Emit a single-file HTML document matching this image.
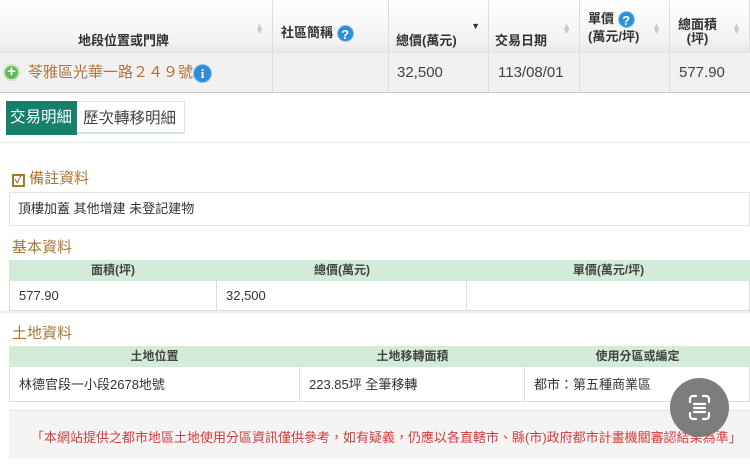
<!DOCTYPE html>
<html><head><meta charset="utf-8"><style>
*{margin:0;padding:0;box-sizing:border-box}
body{width:750px;height:459px;overflow:hidden;background:#fff;font-family:"Liberation Sans","Noto Sans CJK TC",sans-serif;position:relative;color:#333}
.a{position:absolute}
.hd{top:0;height:53px;background:linear-gradient(#fff,#f2f2f2 80%,#e6e6e6);border-right:1px solid #ddd;font-size:13px;font-weight:bold;color:#333}
.dr{top:53px;height:40px;background:#f1f1f1;border-right:1px solid #ddd;border-bottom:1px solid #ccc;font-size:15px;color:#444;line-height:40px}
.sort{position:absolute;right:8px;top:24px;color:#ccc;font-size:9px;line-height:5px}
.q{display:inline-block;width:17px;height:17px;border-radius:50%;background:#2e8fd6;color:#fff;font-size:13px;text-align:center;line-height:17px;vertical-align:middle;border:1px solid #8cc4ee}
.ttl{color:#a9762e;font-size:15px}
.th{background:#d3ebd9;height:21px;font-size:12px;font-weight:bold;color:#444;text-align:center;line-height:21px}
.td{height:30px;font-size:13px;line-height:30px;padding-left:9px;background:#fff;border-right:1px solid #ddd;border-bottom:1px solid #ddd}
</style></head><body>
<div class="a" style="top:0;left:0;width:750px;height:93px;background:#f1f1f1"></div>
<div class="a hd" style="left:0;width:273px"><span class="a" style="left:78px;top:30px">地段位置或門牌</span><span class="sort">▲<br>▼</span></div>
<div class="a hd" style="left:273px;width:116px"><span class="a" style="left:8px;top:22px">社區簡稱 <span class="q">?</span></span></div>
<div class="a hd" style="left:389px;width:100px"><span class="a" style="left:7px;top:30px">總價(萬元)</span><span class="sort" style="color:#333">▼</span></div>
<div class="a hd" style="left:489px;width:91px"><span class="a" style="left:6px;top:30px">交易日期</span><span class="sort">▲<br>▼</span></div>
<div class="a hd" style="left:580px;width:90px"><span class="a" style="left:8px;top:10px;line-height:17px">單價 <span class="q">?</span><br>(萬元/坪)</span><span class="sort">▲<br>▼</span></div>
<div class="a hd" style="left:670px;width:80px"><span class="a" style="left:8px;top:18px;line-height:14px;text-align:center">總面積<br>(坪)</span><span class="sort">▲<br>▼</span></div>
<div class="a dr" style="left:0;width:273px"><span class="a" style="left:3px;top:11px;width:17px;height:17px;border-radius:50%;background:#5cb85c;border:2px solid #c9e6b8;color:#fff;font-size:15px;line-height:12px;text-align:center;font-weight:bold">+</span><span class="a" style="left:28px;color:#b0733d">苓雅區光華一路２４９號<span class="q" style="width:19px;height:19px;font-family:'Liberation Serif';font-weight:bold">i</span></span></div>
<div class="a dr" style="left:273px;width:116px"></div>
<div class="a dr" style="left:389px;width:100px;padding-left:8px">32,500</div>
<div class="a dr" style="left:489px;width:91px;padding-left:9px">113/08/01</div>
<div class="a dr" style="left:580px;width:90px"></div>
<div class="a dr" style="left:670px;width:80px;padding-left:9px;border-right:0">577.90</div>
<div class="a" style="left:6px;top:101px;width:179px;height:33px;border:1px solid #e3e3e3;border-bottom:2px solid #cfe6dc;font-size:15.5px;line-height:33px">
<span class="a" style="left:-1px;top:-1px;width:71px;height:34px;background:#17806b;color:#fff;padding-left:4px">交易明細</span>
<span class="a" style="left:76px;color:#444">歷次轉移明細</span></div>
<div class="a" style="left:0;top:142px;width:750px;height:1px;background:#e8e8e8"></div>
<div class="a ttl" style="left:12px;top:167px"><span style="border:2px solid #a9762e;display:inline-block;width:13px;height:13px;line-height:9px;text-align:center;font-size:11px;font-weight:bold">✓</span> 備註資料</div>
<div class="a" style="left:9px;top:192px;width:741px;height:34px;border:1px solid #e3e3e3;font-size:13px;line-height:32px;padding-left:8px">頂樓加蓋 其他增建 未登記建物</div>
<div class="a ttl" style="left:12px;top:236px">基本資料</div>
<div class="a th" style="left:9px;top:260px;width:208px">面積(坪)</div>
<div class="a th" style="left:217px;top:260px;width:250px">總價(萬元)</div>
<div class="a th" style="left:467px;top:260px;width:283px">單價(萬元/坪)</div>
<div class="a td" style="left:9px;top:281px;width:208px;border-left:1px solid #ddd">577.90</div>
<div class="a td" style="left:217px;top:281px;width:250px">32,500</div>
<div class="a td" style="left:467px;top:281px;width:283px"></div>
<div class="a" style="left:0;top:311px;width:750px;height:2px;background:#eee"></div>
<div class="a ttl" style="left:12px;top:322px">土地資料</div>
<div class="a th" style="left:9px;top:346px;width:291px">土地位置</div>
<div class="a th" style="left:300px;top:346px;width:225px">土地移轉面積</div>
<div class="a th" style="left:525px;top:346px;width:225px">使用分區或編定</div>
<div class="a td" style="left:9px;top:367px;width:291px;height:35px;line-height:35px;border-left:1px solid #ddd">林德官段一小段2678地號</div>
<div class="a td" style="left:300px;top:367px;width:225px;height:35px;line-height:35px">223.85坪 全筆移轉</div>
<div class="a td" style="left:525px;top:367px;width:225px;height:35px;line-height:35px">都市：第五種商業區</div>
<div class="a" style="left:9px;top:410px;width:741px;height:49px;background:#f4f4f4;border-top:1px solid #e3e3e3;color:#d63a3a;font-size:13px;line-height:54px;padding-left:22px;white-space:nowrap">「本網站提供之都市地區土地使用分區資訊僅供參考，如有疑義，仍應以各直轄市、縣(市)政府都市計畫機關審認結果為準」</div>
<div class="a" style="left:670px;top:378px;width:59px;height:59px;border-radius:50%;background:#777;opacity:.95">
<svg width="59" height="59" viewBox="0 0 59 59" fill="none" stroke="#fff" stroke-width="2.2" stroke-linecap="round"><path d="M20 24v-3a3 3 0 0 1 3-3h3M33 18h3a3 3 0 0 1 3 3v3M39 35v3a3 3 0 0 1-3 3h-3M26 41h-3a3 3 0 0 1-3-3v-3M24 26h11M24 30h11M24 34h11"/></svg></div>
</body></html>
